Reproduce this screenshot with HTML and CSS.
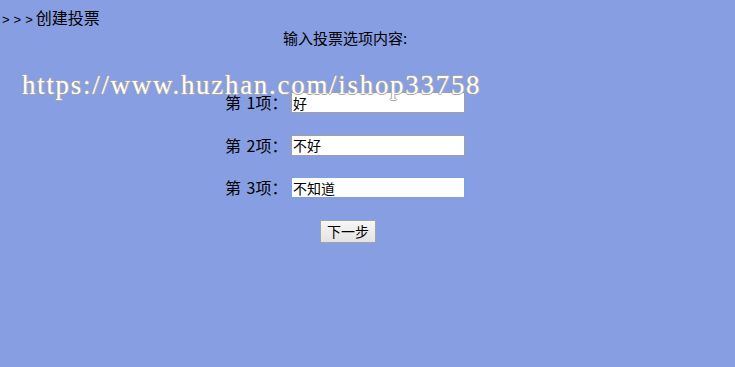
FILE: index.html
```html
<!DOCTYPE html>
<html lang="zh">
<head>
<meta charset="utf-8">
<title>创建投票</title>
<link rel="stylesheet" href="styles.css">
</head>
<body>
<div class="title"><span class="arrows">&gt;&gt;&gt;</span>创建投票</div>
<form class="panel">
  <div class="heading">输入投票选项内容:</div>
  <div class="row"><label class="label">第 1项：</label><input class="field" type="text" value="好"></div>
  <div class="row"><label class="label">第 2项：</label><input class="field" type="text" value="不好"></div>
  <div class="row"><label class="label">第 3项：</label><input class="field field-focus" type="text" value="不知道"></div>
  <button class="next" type="button">下一步</button>
</form>
<div class="watermark">https://www.huzhan.com/ishop33758</div>
</body>
</html>
```
FILE: styles.css
```css
html, body {
  margin: 0;
  padding: 0;
  height: 100%;
}
body {
  background: #879ee3;
  font-family: "Noto Sans CJK SC", "Noto Sans", sans-serif;
  color: #000;
  font-size: 16px;
  position: relative;
  overflow: hidden;
}
.title {
  padding-top: 7px;
  line-height: 20px;
  font-size: 16px;
  height: 20px;
}
.arrows {
  letter-spacing: 4px;
  font-family: "Liberation Sans", sans-serif;
  font-size: 13px;
  margin-left: 2px;
  margin-right: -1px;
}
.panel {
  width: 690px;
  display: flex;
  flex-direction: column;
  align-items: center;
  margin: 0;
}
.heading {
  line-height: 20px;
  height: 20px;
  margin-top: 1px;
  margin-bottom: 44px;
  font-size: 15px;
}
.row {
  display: flex;
  align-items: center;
  height: 21px;
  margin-bottom: 21.5px;
}
.label {
  font-size: 16px;
  line-height: 21px;
  width: 66px;
  word-spacing: 2px;
}
.field {
  box-sizing: border-box;
  width: 174px;
  height: 21px;
  border: 1px solid #a0a0a0;
  background: #fff;
  padding: 0 1px;
  font-family: "Noto Sans CJK SC", sans-serif;
  font-size: 14px;
  line-height: 19px;
  color: #000;
  outline: none;
}
.field-focus {
  border-color: #7aa0e8;
}
.next {
  margin-left: 6px;
  width: 56px;
  height: 23px;
  box-sizing: border-box;
  border: 1px solid #a3a3a3;
  background: linear-gradient(#f6f6f6, #e3e3e3);
  font-family: "Noto Sans CJK SC", sans-serif;
  font-size: 14px;
  padding: 0;
  color: #000;
}
.watermark {
  position: absolute;
  left: 22px;
  top: 67px;
  font-family: "Liberation Serif", "DejaVu Serif", serif;
  font-size: 27px;
  letter-spacing: 1.7px;
  line-height: 36px;
  color: #ffffff;
  text-shadow: 1px 0 0 #a8a8a8, -1px 0 0 #a8a8a8, 0 1px 0 #a8a8a8, 0 -1px 0 #a8a8a8;
  pointer-events: none;
  white-space: nowrap;
}
```
